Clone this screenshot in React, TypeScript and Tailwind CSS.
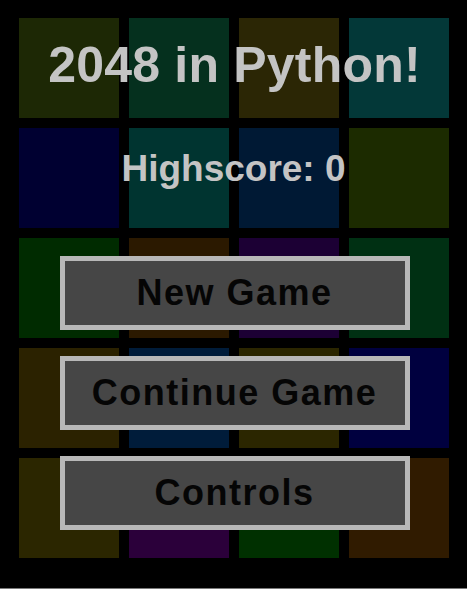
const tiles = [
  "bg-[#1d2805]", "bg-[#05301e]", "bg-[#2b2605]", "bg-[#033838]",
  "bg-[#000031]", "bg-[#003430]", "bg-[#001934]", "bg-[#1c2b00]",
  "bg-[#002b00]", "bg-[#2b1900]", "bg-[#1c0034]", "bg-[#003013]",
  "bg-[#2b2200]", "bg-[#001c3a]", "bg-[#2b2600]", "bg-[#00003f]",
  "bg-[#2b2600]", "bg-[#2b003a]", "bg-[#003000]", "bg-[#301b00]",
]

function MenuButton({ label }: { label: string }) {
  return (
    <div className="flex h-[74px] w-[350px] items-center justify-center border-[5px] border-[#b8b8b8] bg-[#464646]">
      <span className="text-[36px] font-bold leading-none tracking-[1.5px] text-[#050505]">{label}</span>
    </div>
  )
}

export default function App() {
  return (
    <div
      className="relative h-[589px] w-[467px] overflow-hidden border-b border-[#7a7a7a] bg-black"
      style={{ fontFamily: '"Liberation Sans", Arial, sans-serif' }}
    >
      {/* board in the background */}
      <div className="grid grid-cols-[repeat(4,100px)] gap-[10px] pl-[19px] pt-[18px]">
        {tiles.map((c, i) => (
          <div key={i} className={`h-[100px] w-[100px] ${c}`} />
        ))}
      </div>

      {/* menu overlay */}
      <div className="absolute inset-0 flex flex-col items-center pt-[40px]">
        <h1 className="pl-[2px] text-[50px] font-bold leading-none tracking-[0.2px] text-[#c4c4c4]">2048 in Python!</h1>
        <p className="mt-[60px] text-[37px] font-bold leading-none text-[#c4c4c4]">Highscore: 0</p>
        <div className="mt-[69px] flex flex-col gap-[26px] pl-[2px]">
          <MenuButton label="New Game" />
          <MenuButton label="Continue Game" />
          <MenuButton label="Controls" />
        </div>
      </div>
    </div>
  )
}
